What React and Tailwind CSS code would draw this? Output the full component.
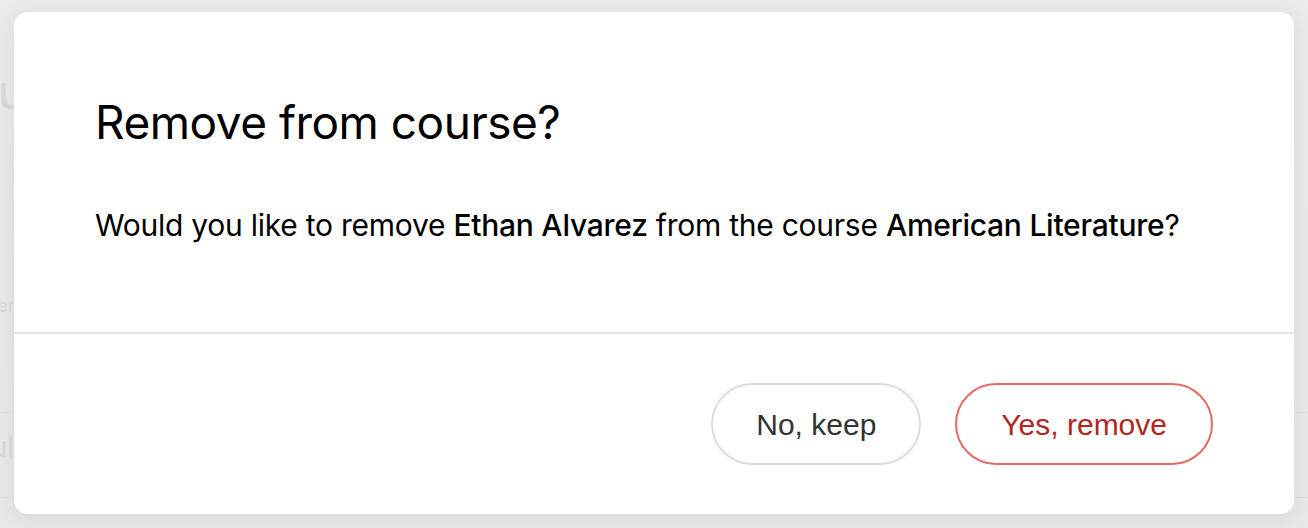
import React from 'react';

function BackgroundPage() {
  return (
    <div className="flex h-full flex-col bg-[#ebebeb] font-['Inter',sans-serif] text-[#d6d6d6]">
      <div className="ml-[-60px] mt-[62px] text-[48px] leading-[60px]">Your courses</div>
      <div className="ml-[-40px] mt-[172px] text-[18px] leading-[24px]">Roster and enrolment</div>
      <div className="mt-[94px] h-px w-full bg-[#dedede]" />
      <div className="ml-[-58px] mt-[14px] text-[28px] leading-[40px]">Result</div>
      <div className="mt-[30px] h-px w-full bg-[#dedede]" />
    </div>
  );
}

export default function App() {
  return (
    <div className="relative h-[528px] w-full overflow-hidden">
      <BackgroundPage />

      <div className="absolute inset-0 bg-gradient-to-b from-[#e9e9e9]/20 to-[#e2e2e2]/30" />

      <div
        role="dialog"
        className="absolute left-[14px] right-[14px] top-[12px] bottom-[14px] flex flex-col rounded-[14px] bg-white shadow-[0_4px_24px_rgba(0,0,0,0.08)]"
      >
        <div className="h-[320px] shrink-0 px-[81px] pt-[82px] font-['Inter',sans-serif] text-black">
          <h2 className="text-[46px] font-normal leading-[56px] tracking-[-0.5px]">Remove from course?</h2>
          <p className="mt-[57px] text-[30px] leading-[36px] tracking-[-0.25px]">
            Would you like to remove <span className="font-medium">Ethan Alvarez</span> from the course{' '}
            <span className="font-medium">American Literature</span>?
          </p>
        </div>

        <div className="flex flex-1 items-center justify-end gap-[34px] border-t-2 border-[#e6e6e6] pr-[81px] font-['Liberation_Sans',Arial,sans-serif]">
          <button className="h-[82px] rounded-full border-2 border-[#dcdcdc] bg-white px-[43px] text-[30px] text-[#333333]">
            No, keep
          </button>
          <button className="h-[82px] rounded-full border-2 border-[#e46a63] bg-white px-[44px] text-[30px] text-[#b1271f]">
            Yes, remove
          </button>
        </div>
      </div>
    </div>
  );
}
